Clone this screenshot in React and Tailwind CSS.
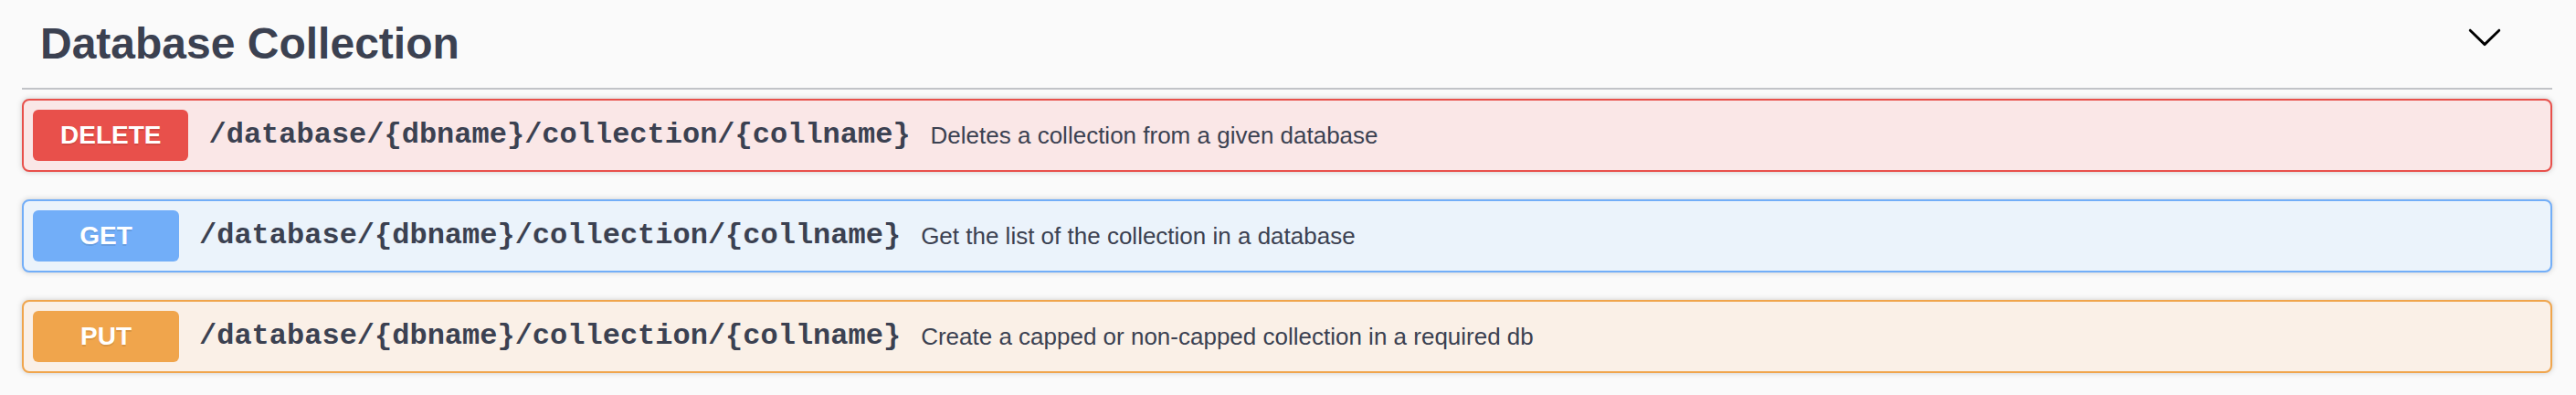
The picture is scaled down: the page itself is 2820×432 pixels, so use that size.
import React from 'react'

const ops = [
  {
    method: 'DELETE',
    path: '/database/{dbname}/collection/{collname}',
    summary: 'Deletes a collection from a given database',
    block: 'border-[#e8504b] bg-[#fae7e7]',
    badge: 'bg-[#e8504b]',
  },
  {
    method: 'GET',
    path: '/database/{dbname}/collection/{collname}',
    summary: 'Get the list of the collection in a database',
    block: 'border-[#72aef8] bg-[#ebf3fb]',
    badge: 'bg-[#72aef8]',
  },
  {
    method: 'PUT',
    path: '/database/{dbname}/collection/{collname}',
    summary: 'Create a capped or non-capped collection in a required db',
    block: 'border-[#f0a54c] bg-[#faf0e7]',
    badge: 'bg-[#f0a54c]',
  },
]

const Arrow = () => (
  <svg width="40" height="40" viewBox="0 0 20 20" className="shrink-0" fill="#000">
    <path d="M17.418 6.109c.272-.268.709-.268.979 0s.271.701 0 .969l-7.908 7.83c-.27.268-.707.268-.979 0l-7.908-7.83c-.27-.268-.27-.701 0-.969.271-.268.709-.268.979 0L10 13.25l7.418-7.141z" />
  </svg>
)

const OpBlock = ({ op }) => (
  <div className={`mb-[30px] flex items-center rounded-[8px] border-2 p-[10px] shadow-[0_0_6px_rgba(0,0,0,0.19)] ${op.block}`}>
    <span
      className={`flex h-[56px] min-w-[160px] shrink-0 items-center justify-center rounded-[6px] px-[30px] text-[28px] font-bold text-white [text-shadow:0_2px_0_rgba(0,0,0,0.1)] ${op.badge}`}
      style={{ fontFamily: '"Liberation Sans", Arial, sans-serif' }}
    >
      {op.method}
    </span>
    <span
      className="ml-[22px] text-[32px] font-bold text-[#3b4151]"
      style={{ fontFamily: '"Liberation Mono", "Courier New", monospace' }}
    >
      {op.path}
    </span>
    <span
      className="ml-[22px] text-[26px] text-[#3b4151]"
      style={{ fontFamily: '"Liberation Sans", Arial, sans-serif' }}
    >
      {op.summary}
    </span>
  </div>
)

export default function App() {
  return (
    <div className="h-[432px] w-full overflow-hidden bg-[#fafafa] pl-[24px] pr-[26px]">
      <h4
        className="mb-[10px] flex items-start border-b-2 border-[#c1c3c7] py-[20px] pl-[20px] pr-[54px] text-[48px] font-bold leading-[56px] text-[#3b4151]"
        style={{ fontFamily: '"Liberation Sans", Arial, sans-serif' }}
      >
        <span className="flex-1">Database Collection</span>
        <Arrow />
      </h4>
      {ops.map(op => (
        <OpBlock key={op.method} op={op} />
      ))}
    </div>
  )
}
